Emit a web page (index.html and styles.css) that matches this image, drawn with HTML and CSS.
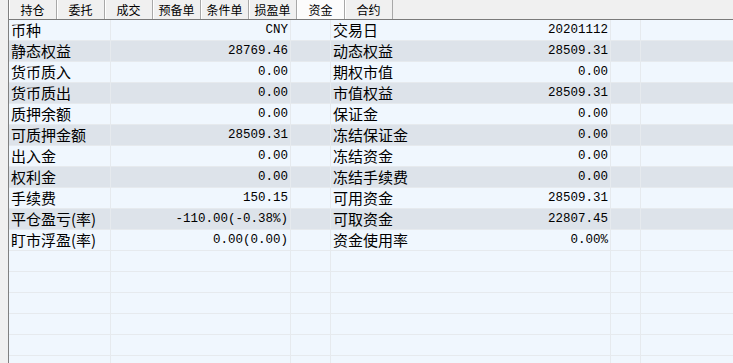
FILE: index.html
```html
<!DOCTYPE html>
<html lang="zh-CN">
<head>
  <meta charset="UTF-8">
  <title>资金</title>
  <link rel="stylesheet" href="styles.css">
</head>
<body>
  <div class="panel">
    <div class="tabs">
      <span class="tab">持仓</span>
      <span class="tab">委托</span>
      <span class="tab">成交</span>
      <span class="tab">预备单</span>
      <span class="tab">条件单</span>
      <span class="tab">损盈单</span>
      <span class="tab active">资金</span>
      <span class="tab">合约</span>
    </div>

    <div class="grid">
      <div class="row"><span class="lbl">币种</span><span class="val">CNY</span><span></span><span class="pair"><b>交易日</b><i>20201112</i></span><span></span><span></span></div>
      <div class="row alt"><span class="lbl">静态权益</span><span class="val">28769.46</span><span></span><span class="pair"><b>动态权益</b><i>28509.31</i></span><span></span><span></span></div>
      <div class="row"><span class="lbl">货币质入</span><span class="val">0.00</span><span></span><span class="pair"><b>期权市值</b><i>0.00</i></span><span></span><span></span></div>
      <div class="row alt"><span class="lbl">货币质出</span><span class="val">0.00</span><span></span><span class="pair"><b>市值权益</b><i>28509.31</i></span><span></span><span></span></div>
      <div class="row"><span class="lbl">质押余额</span><span class="val">0.00</span><span></span><span class="pair"><b>保证金</b><i>0.00</i></span><span></span><span></span></div>
      <div class="row alt"><span class="lbl">可质押金额</span><span class="val">28509.31</span><span></span><span class="pair"><b>冻结保证金</b><i>0.00</i></span><span></span><span></span></div>
      <div class="row"><span class="lbl">出入金</span><span class="val">0.00</span><span></span><span class="pair"><b>冻结资金</b><i>0.00</i></span><span></span><span></span></div>
      <div class="row alt"><span class="lbl">权利金</span><span class="val">0.00</span><span></span><span class="pair"><b>冻结手续费</b><i>0.00</i></span><span></span><span></span></div>
      <div class="row"><span class="lbl">手续费</span><span class="val">150.15</span><span></span><span class="pair"><b>可用资金</b><i>28509.31</i></span><span></span><span></span></div>
      <div class="row alt"><span class="lbl">平仓盈亏(率)</span><span class="val">-110.00(-0.38%)</span><span></span><span class="pair"><b>可取资金</b><i>22807.45</i></span><span></span><span></span></div>
      <div class="row"><span class="lbl">盯市浮盈(率)</span><span class="val">0.00(0.00)</span><span></span><span class="pair"><b>资金使用率</b><i>0.00%</i></span><span></span><span></span></div>
      <div class="row"><span></span><span></span><span></span><span></span><span></span><span></span></div>
      <div class="row"><span></span><span></span><span></span><span></span><span></span><span></span></div>
      <div class="row"><span></span><span></span><span></span><span></span><span></span><span></span></div>
      <div class="row"><span></span><span></span><span></span><span></span><span></span><span></span></div>
      <div class="row"><span></span><span></span><span></span><span></span><span></span><span></span></div>
      <div class="row"><span></span><span></span><span></span><span></span><span></span><span></span></div>
    </div>
  </div>
</body>
</html>
```

FILE: styles.css
```css
* { margin: 0; padding: 0; box-sizing: border-box; }
html, body { height: 100%; }
body {
  background: #f0f0f0;
  font-family: "Noto Sans CJK SC", sans-serif;
  color: #000;
  overflow: hidden;
  padding-left: 8px;
}
.panel {
  height: 100%;
  overflow: hidden;
  border-left: 1px solid #808080;
}
.tabs {
  display: flex;
  height: 20px;
  border-bottom: 1px solid #7a7a7a;
  background: #f0f0f0;
}
.tab {
  width: 48px;
  text-align: center;
  font-size: 12px;
  line-height: 19px;
  border-right: 1px solid #a8a8a8;
  box-shadow: inset 1px 0 0 #ffffff;
}
.tab.active { background: #fcfcfc; }
.row {
  display: grid;
  grid-template-columns: 102px 180px 40px 280px 30px 1fr;
  height: 21px;
  background: #f0f7fe;
  border-bottom: 1px solid #e6eaee;
}
.row.alt { background: #dde3ea; }
.row > span {
  border-right: 1px solid #e6eaee;
  height: 20px;
  line-height: 20px;
  white-space: nowrap;
  overflow: hidden;
}
.row > span:last-child { border-right: none; }
.lbl, .pair b {
  font-size: 15px;
  font-weight: normal;
  padding-left: 2px;
}
.val, .pair i {
  font-family: "Liberation Mono", monospace;
  font-size: 12.5px;
  font-style: normal;
  text-align: right;
  padding-right: 2px;
}
.pair {
  display: flex;
  justify-content: space-between;
}
```
